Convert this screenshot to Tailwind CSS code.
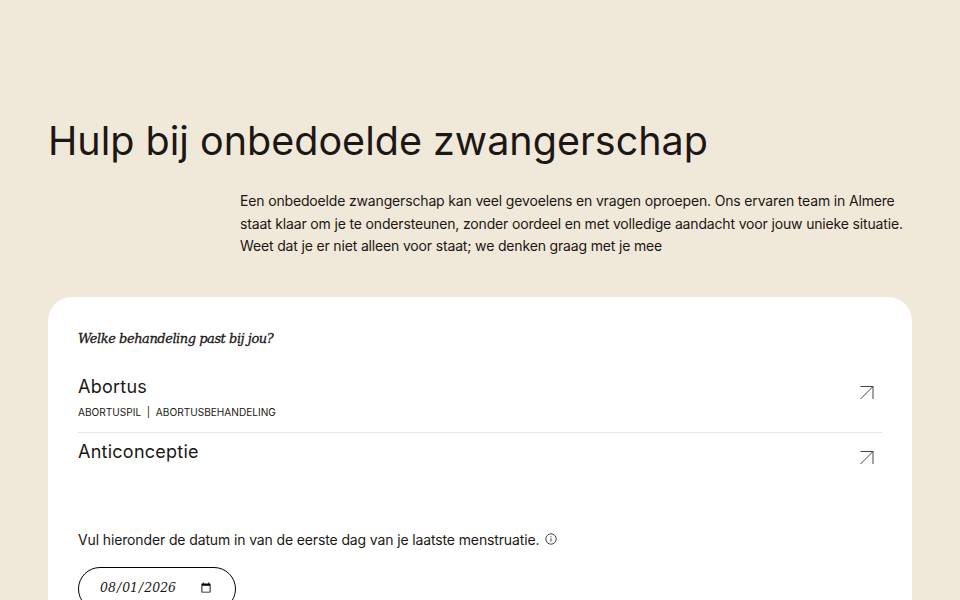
<!DOCTYPE html>
<html lang="nl">
<head>
    <meta charset="UTF-8">
    <title>Hulp bij onbedoelde zwangerschap</title>
    <script src="https://cdn.jsdelivr.net/npm/@tailwindcss/browser@4"></script>
</head>
<body class="bg-[#f0e8d9] h-[600px] overflow-hidden font-['Inter',sans-serif] text-[#1c1714]">

<main class="px-12 pt-[116px]">
    <h1 class="text-[39.5px] leading-[50px] whitespace-nowrap">Hulp bij onbedoelde zwangerschap</h1>

    <p class="mt-[24px] ml-[192px] text-[14px] leading-[22.5px] tracking-[-0.16px] whitespace-nowrap">
        Een onbedoelde zwangerschap kan veel gevoelens en vragen oproepen. Ons ervaren team in Almere<br>
        staat klaar om je te ondersteunen, zonder oordeel en met volledige aandacht voor jouw unieke situatie.<br>
        Weet dat je er niet alleen voor staat; we denken graag met je mee
    </p>

    <!-- Card -->
    <section class="mt-[39px] bg-white rounded-t-[24px] px-[30px] pt-[33px] h-[400px]">
        <p class="font-['DejaVu_Serif',serif] italic font-medium text-[13px] leading-[18px] tracking-[-0.46px] [-webkit-text-stroke:0.3px]">Welke behandeling past bij jou?</p>

        <a class="mt-[19px] flex justify-between border-b border-[#e5e5e5] h-[66px] pt-[8px]">
            <div>
                <div class="text-[18px] leading-[24px] tracking-[0.25px]">Abortus</div>
                <div class="mt-[5px] text-[10.1px] leading-[16px] whitespace-nowrap">ABORTUSPIL&nbsp; |&nbsp; ABORTUSBEHANDELING</div>
            </div>
            <svg class="w-4 h-4 mr-[7px] mt-[10px]" viewBox="0 0 16 16" fill="none" stroke="#444" stroke-width="1"><path d="M1.5 14 14 1.5M1.5 1.5H14V14"/></svg>
        </a>

        <a class="flex justify-between h-[76px] pt-[7px]">
            <div class="text-[18px] leading-[24px] tracking-[0.25px]">Anticonceptie</div>
            <svg class="w-4 h-4 mr-[7px] mt-[10px]" viewBox="0 0 16 16" fill="none" stroke="#444" stroke-width="1"><path d="M1.5 14 14 1.5M1.5 1.5H14V14"/></svg>
        </a>

        <div class="mt-[20px] flex items-center gap-[6px] text-[14px] leading-[22px] tracking-[-0.13px] whitespace-nowrap">
            <span>Vul hieronder de datum in van de eerste dag van je laatste menstruatie.</span>
            <svg class="w-3 h-3 mb-[2px]" viewBox="0 0 12 12" fill="none" stroke="#1c1714" stroke-width="0.8"><circle cx="6" cy="6" r="5.2"/><path d="M6 5.2v3.4M6 3.2v1"/></svg>
        </div>

        <input type="date" value="2026-08-01" class="mt-[16px] block w-[158px] h-[44px] border border-black rounded-full pl-[20px] pr-[21px] font-['DejaVu_Serif',serif] italic text-[12.5px]">
    </section>
</main>

</body>
</html>
